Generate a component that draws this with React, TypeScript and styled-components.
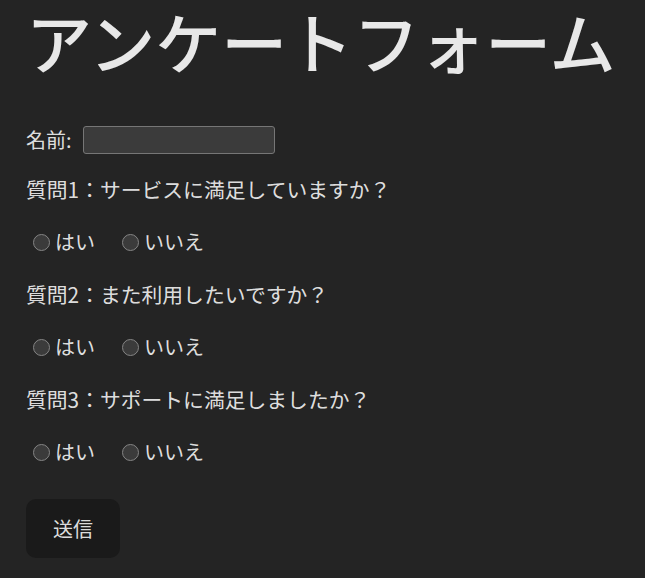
import React, { useState } from "react";
import styled, { createGlobalStyle } from "styled-components";

const GlobalStyle = createGlobalStyle`
  html, body {
    margin: 0;
    padding: 0;
    background: #242424;
  }
  body {
    color: rgba(255, 255, 255, 0.87);
    font-family: "Noto Sans CJK JP", "Noto Sans", sans-serif;
    font-size: 20px;
    line-height: 1.5;
    color-scheme: dark;
  }
`;

const Page = styled.div`
  min-height: 578px;
  padding: 1px 8px 0 26px;
  box-sizing: border-box;
`;

const Title = styled.h1`
  margin: 0 0 45px;
  font-size: 66px;
  line-height: 1.2;
  font-weight: 500;
  color: #e8e8e8;
  letter-spacing: 0;
  white-space: nowrap;
`;

const Form = styled.form`
  display: flex;
  flex-direction: column;
  align-items: flex-start;
`;

const NameRow = styled.label`
  display: flex;
  align-items: center;
  gap: 11px;
  height: 30px;
  margin-bottom: 19px;
`;

const TextInput = styled.input`
  width: 192px;
  height: 28px;
  box-sizing: border-box;
  border: 1px solid #767676;
  border-radius: 3px;
  background: #3b3b3b;
  color: #fff;
  font: inherit;
  font-size: 16px;
  padding: 0 4px;
  outline: none;
`;

const Question = styled.p`
  margin: 0 0 23px;
  height: 30px;
  font-size: 20.8px;
`;

const Choices = styled.div<{ $last?: boolean }>`
  display: flex;
  align-items: center;
  gap: 20px;
  height: 30px;
  margin-bottom: ${(p) => (p.$last ? "32px" : "22px")};
`;

const Choice = styled.label`
  display: flex;
  align-items: center;
`;

const Radio = styled.input`
  appearance: none;
  width: 17px;
  height: 17px;
  margin: 1px 5px 0 7px;
  box-sizing: border-box;
  border: 1.5px solid #858585;
  border-radius: 50%;
  background: #3b3b3b;
  &:checked {
    background: radial-gradient(circle, #99c8ff 0 4px, #3b3b3b 4.5px);
    border-color: #99c8ff;
  }
`;

const SubmitButton = styled.button`
  width: 94px;
  height: 59px;
  border: 1px solid transparent;
  border-radius: 10px;
  background: #1a1a1a;
  color: rgba(255, 255, 255, 0.87);
  font: inherit;
  font-size: 20px;
  cursor: pointer;
`;

const questions = [
  "質問1：サービスに満足していますか？",
  "質問2：また利用したいですか？",
  "質問3：サポートに満足しましたか？",
];

export default function App() {
  const [answers, setAnswers] = useState<Record<number, string>>({});

  return (
    <>
      <GlobalStyle />
      <Page>
        <Title>アンケートフォーム</Title>
        <Form onSubmit={(e) => e.preventDefault()}>
          <NameRow>
            名前:
            <TextInput type="text" />
          </NameRow>
          {questions.map((q, i) => (
            <React.Fragment key={q}>
              <Question>{q}</Question>
              <Choices $last={i === questions.length - 1}>
                {["はい", "いいえ"].map((opt) => (
                  <Choice key={opt}>
                    <Radio
                      type="radio"
                      name={`q${i}`}
                      checked={answers[i] === opt}
                      onChange={() => setAnswers({ ...answers, [i]: opt })}
                    />
                    {opt}
                  </Choice>
                ))}
              </Choices>
            </React.Fragment>
          ))}
          <SubmitButton type="submit">送信</SubmitButton>
        </Form>
      </Page>
    </>
  );
}
